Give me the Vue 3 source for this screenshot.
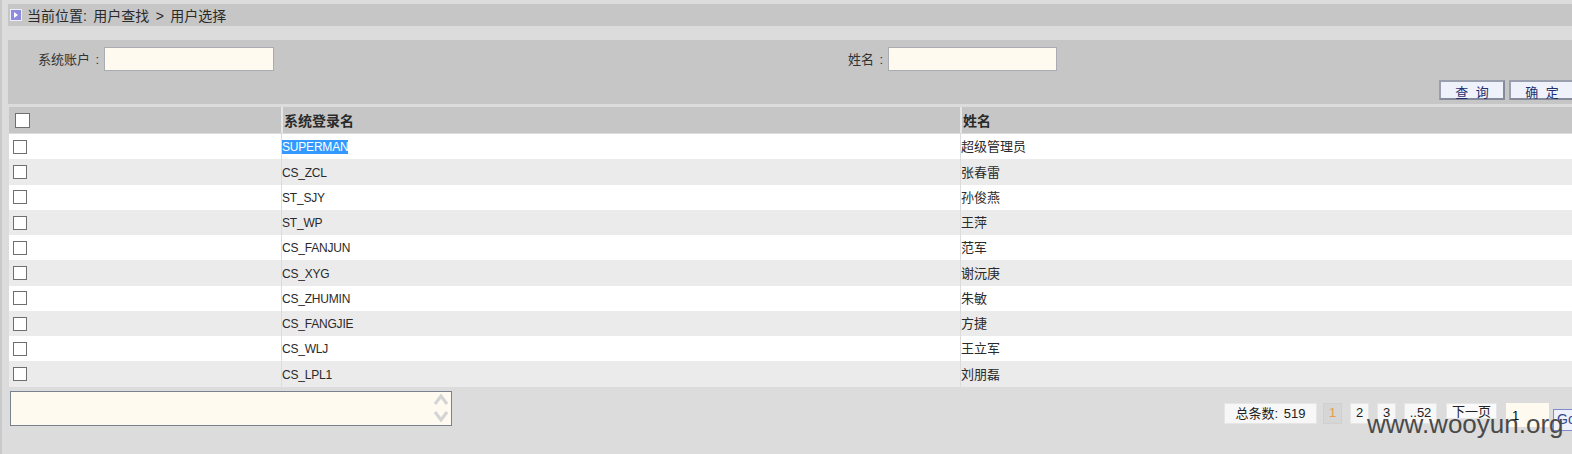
<template>
  <div class="page">
    <div class="crumb">
      <span class="crumb-icon"><i></i></span>
      <span class="crumb-text">当前位置: 用户查找 &gt; 用户选择</span>
    </div>

    <div class="search">
      <div class="search-fields">
        <label class="field field-account"><span class="field-label w-account">系统账户 :</span><input class="text-input wide" type="text" /></label>
        <label class="field"><span class="field-label w-name">姓名 :</span><input class="text-input" type="text" /></label>
      </div>
      <div class="search-actions">
        <button class="btn">查 询</button>
        <button class="btn">确 定</button>
      </div>
    </div>

    <div class="grid">
      <div class="row head">
        <div class="cell"><input class="check check-head" type="checkbox" /></div>
        <div class="cell">系统登录名</div>
        <div class="cell">姓名</div>
      </div>
      <div v-for="(u, i) in users" :key="u.login" class="row" :class="i % 2 ? 'even' : 'odd'">
        <div class="cell"><input class="check" type="checkbox" /></div>
        <div class="cell cell-login"><span :class="{ picked: i === 0 }">{{ u.login }}</span></div>
        <div class="cell cell-name">{{ u.name }}</div>
      </div>
    </div>

    <div class="bottom">
      <div class="memo">
        <svg class="memo-arrows" width="16" height="32" viewBox="0 0 16 32">
          <path d="M2 12 L8 4 L14 12" />
          <path d="M2 20 L8 28 L14 20" />
        </svg>
      </div>
      <div class="pager">
        <span class="pg total">总条数: 519</span>
        <span class="pg num current">1</span>
        <span class="pg num">2</span>
        <span class="pg num">3</span>
        <span class="pg more">..52</span>
        <span class="pg next">下一页</span>
        <input class="pg-input" type="text" value="1" />
        <span class="go">Go</span>
      </div>
    </div>

    <div class="watermark">www.wooyun.org</div>
  </div>
</template>

<script setup>
const users = [
  { login: 'SUPERMAN', name: '超级管理员' },
  { login: 'CS_ZCL', name: '张春雷' },
  { login: 'ST_SJY', name: '孙俊燕' },
  { login: 'ST_WP', name: '王萍' },
  { login: 'CS_FANJUN', name: '范军' },
  { login: 'CS_XYG', name: '谢沅庚' },
  { login: 'CS_ZHUMIN', name: '朱敏' },
  { login: 'CS_FANGJIE', name: '方捷' },
  { login: 'CS_WLJ', name: '王立军' },
  { login: 'CS_LPL1', name: '刘朋磊' }
]
</script>

<style>
html, body { margin: 0; background: #dcdcdc; overflow: hidden; }
</style>

<style scoped>
.page {
  position: relative;
  width: 1572px;
  height: 454px;
  overflow: hidden;
  box-sizing: border-box;
  padding: 4px 0 0 6px;
  background: #dcdcdc;
  border-left: 2px solid #c9c9c9;
  font-family: "Liberation Sans", "Noto Sans CJK SC", sans-serif;
  font-size: 12px;
  color: #2a2a2a;
}

.crumb {
  display: flex;
  align-items: center;
  gap: 5px;
  height: 22px;
  padding-left: 2px;
  background: #c6c6c6;
  font-size: 14px;
}
.crumb-text { word-spacing: 2.5px; }
.crumb-icon {
  display: flex;
  align-items: center;
  justify-content: center;
  width: 12px;
  height: 12px;
  box-sizing: border-box;
  background: #8f8bdc;
  border: 1px solid #eeeeff;
}
.crumb-icon i {
  width: 0;
  height: 0;
  border-left: 4px solid #fff;
  border-top: 3px solid transparent;
  border-bottom: 3px solid transparent;
}

.search {
  margin-top: 14px;
  height: 64px;
  background: #c6c6c6;
  width: 1600px;
}
.search-fields {
  display: flex;
  padding-top: 7px;
  height: 24px;
}
.field {
  display: flex;
  align-items: center;
  font-size: 13px;
  color: #333;
}
.field-account { margin-left: 30px; width: 810px; }
.field-label { padding-bottom: 2px; word-spacing: 2px; white-space: nowrap; }
.w-account { width: 66px; }
.w-name { width: 40px; }
.text-input {
  width: 169px;
  height: 24px;
  box-sizing: border-box;
  background: #fffaf0;
  border: 1px solid #a9acb2;
  padding: 0;
  margin: 0;
}
.wide { width: 170px; }
.search-actions {
  display: flex;
  gap: 4px;
  padding: 9px 0 0 1431px;
}
.btn {
  width: 66px;
  height: 20px;
  flex: none;
  padding: 0;
  box-sizing: border-box;
  background: #eff2fb;
  border: 2px solid #868b99;
  border-top-color: #9a9fae;
  border-left-color: #9a9fae;
  color: #1e2f70;
  font-family: inherit;
  font-size: 13px;
  word-spacing: 4px;
}

.grid {
  margin-top: 3px;
  margin-left: 1px;
  width: 1600px;
}
.row {
  display: grid;
  grid-template-columns: 272px 679px 1fr;
  height: 25.25px;
  align-items: stretch;
}
.cell {
  display: flex;
  align-items: center;
  border-left: 1px solid #dcdcdc;
  box-sizing: border-box;
  overflow: hidden;
}
.cell:first-child { border-left: 0; padding-left: 4px; }
.head {
  height: 26px;
  margin-bottom: 1.2px;
  background: #c6c6c6;
  font-size: 14px;
  font-weight: 700;
}
.head .cell { padding-left: 1px; border-left: 2px solid #e6e6e6; }
.head .cell:first-child { padding-left: 6px; border-left: 0; }
.odd { background: #fff; }
.even { background: #ebebeb; }
.cell-login { letter-spacing: -0.2px; padding-top: 1px; }
.cell-name { font-size: 13px; padding-bottom: 2px; }
.check {
  appearance: none;
  margin: 0;
  width: 14px;
  height: 14px;
  box-sizing: border-box;
  background: #fff;
  border: 1px solid #6f6f6f;
}
.check-head { width: 15px; height: 15px; }
.picked {
  background: #3399ff;
  color: #fff;
}

.bottom {
  display: flex;
  margin-left: 2px;
  margin-top: 4px;
}
.memo {
  display: flex;
  align-items: center;
  justify-content: flex-end;
  width: 442px;
  height: 35px;
  box-sizing: border-box;
  padding-right: 2px;
  background: #fffaf0;
  border: 1px solid #78828e;
  flex: none;
}
.memo-arrows path {
  fill: none;
  stroke: #d4d4d4;
  stroke-width: 3;
}
.pager {
  display: flex;
  align-items: flex-start;
  margin-left: 772px;
  padding-top: 12px;
  font-size: 13px;
  color: #222;
}
.pg {
  display: flex;
  align-items: center;
  justify-content: center;
  height: 21px;
  padding-bottom: 2px;
  background: #f7f7f7;
  box-sizing: border-box;
  border: 1px solid #e6e6e6;
  flex: none;
}
.total { width: 93px; margin-right: 6px; word-spacing: 2px; }
.num { width: 19px; margin-right: 8px; }
.current { background: #d6d6d6; color: #e89a4e; border-color: #d0d0d0; }
.more { width: 33px; margin-right: 9px; }
.next { width: 51px; height: 16px; padding-bottom: 0; margin-right: 9px; background: #fafafa; }
.pg-input {
  width: 43px;
  height: 24px;
  box-sizing: border-box;
  padding: 2px 0 0 6px;
  margin: 0 4px 0 0;
  background: #fffaf0;
  border: 0;
  font-family: inherit;
  font-size: 13px;
  flex: none;
}
.go {
  display: block;
  flex: none;
  width: 30px;
  height: 22px;
  margin-top: 6px;
  box-sizing: border-box;
  padding: 1px 0 0 3px;
  background: #eff2fb;
  border: 1px solid #7f8bd0;
  color: #2f4a90;
  font-size: 14px;
}

.watermark {
  position: absolute;
  left: 1365px;
  top: 409px;
  font-size: 26px;
  line-height: 30px;
  color: #4a4a4a;
  white-space: nowrap;
}
</style>
